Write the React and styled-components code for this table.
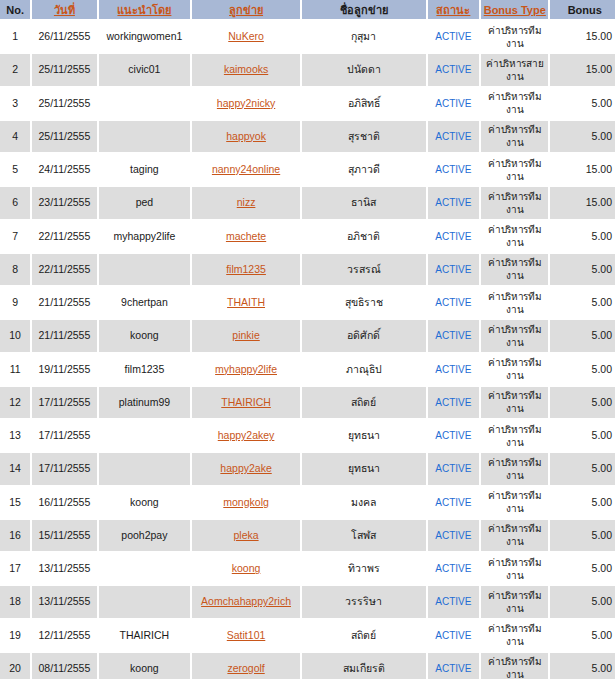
import React from 'react'
import styled, { createGlobalStyle } from 'styled-components'

const GlobalStyle = createGlobalStyle`
  body {
    margin: 0;
    background: #fff;
    font-family: "Liberation Sans", Arial, sans-serif;
  }
`

const Wrap = styled.div`
  width: 615px;
  height: 679px;
  overflow: hidden;
`

const Table = styled.table`
  border-collapse: separate;
  border-spacing: 2px;
  margin: -2px 0 0 -2px;
  table-layout: fixed;
  width: 623px;
  font-size: 10.5px;
  color: #1a1a1a;
`

const HeadCell = styled.th`
  height: 19px;
  padding: 0;
  background: #a8b8d5;
  font-weight: bold;
  font-size: 11px;
  text-align: center;
  vertical-align: middle;
  color: #1c1c1c;
  white-space: nowrap;
`

const Row = styled.tr`
  height: 31.25px;
`

const Cell = styled.td`
  height: 31.25px;
  padding: 0 ${(p) => (p.$align === 'right' ? '7px' : '1px')} 0 1px;
  background: ${(p) => (p.$alt ? '#dddddd' : '#ffffff')};
  text-align: ${(p) => p.$align || 'center'};
  vertical-align: middle;
  line-height: 13px;
  white-space: nowrap;
  overflow: hidden;
`

const Link = styled.a`
  color: #c8561a;
  text-decoration: underline;
  cursor: pointer;
`

const Status = styled.span`
  color: #1f6dd4;
  font-size: 10px;
`

const TypeText = styled.span`
  display: block;
  font-size: 10px;
  letter-spacing: -0.3px;
  line-height: 13px;
  white-space: nowrap;
`

const cols = [30, 64, 91, 107, 123, 51, 67, 68]

const rows = [
  ['26/11/2555', 'workingwomen1', 'NuKero', 'กุสุมา', 'ค่าบริหารทีม', '15.00'],
  ['25/11/2555', 'civic01', 'kaimooks', 'ปนัดดา', 'ค่าบริหารสาย', '15.00'],
  ['25/11/2555', '', 'happy2nicky', 'อภิสิทธิ์', 'ค่าบริหารทีม', '5.00'],
  ['25/11/2555', '', 'happyok', 'สุรชาติ', 'ค่าบริหารทีม', '5.00'],
  ['24/11/2555', 'taging', 'nanny24online', 'สุภาวดี', 'ค่าบริหารทีม', '15.00'],
  ['23/11/2555', 'ped', 'nizz', 'ธานิส', 'ค่าบริหารทีม', '15.00'],
  ['22/11/2555', 'myhappy2life', 'machete', 'อภิชาติ', 'ค่าบริหารทีม', '5.00'],
  ['22/11/2555', '', 'film1235', 'วรสรณ์', 'ค่าบริหารทีม', '5.00'],
  ['21/11/2555', '9chertpan', 'THAITH', 'สุขธิราช', 'ค่าบริหารทีม', '5.00'],
  ['21/11/2555', 'koong', 'pinkie', 'อดิศักดิ์', 'ค่าบริหารทีม', '5.00'],
  ['19/11/2555', 'film1235', 'myhappy2life', 'ภาณุธิป', 'ค่าบริหารทีม', '5.00'],
  ['17/11/2555', 'platinum99', 'THAIRICH', 'สถิตย์', 'ค่าบริหารทีม', '5.00'],
  ['17/11/2555', '', 'happy2akey', 'ยุทธนา', 'ค่าบริหารทีม', '5.00'],
  ['17/11/2555', '', 'happy2ake', 'ยุทธนา', 'ค่าบริหารทีม', '5.00'],
  ['16/11/2555', 'koong', 'mongkolg', 'มงคล', 'ค่าบริหารทีม', '5.00'],
  ['15/11/2555', 'pooh2pay', 'pleka', 'โสฬส', 'ค่าบริหารทีม', '5.00'],
  ['13/11/2555', '', 'koong', 'ทิวาพร', 'ค่าบริหารทีม', '5.00'],
  ['13/11/2555', '', 'Aomchahappy2rich', 'วรรริษา', 'ค่าบริหารทีม', '5.00'],
  ['12/11/2555', 'THAIRICH', 'Satit101', 'สถิตย์', 'ค่าบริหารทีม', '5.00'],
  ['08/11/2555', 'koong', 'zerogolf', 'สมเกียรติ', 'ค่าบริหารทีม', '5.00']
]

export default function App () {
  return (
    <Wrap>
      <GlobalStyle />
      <Table>
        <colgroup>
          {cols.map((w, i) => <col key={i} style={{ width: w }} />)}
        </colgroup>
        <thead>
          <tr>
            <HeadCell>No.</HeadCell>
            <HeadCell><Link>วันที่</Link></HeadCell>
            <HeadCell><Link>แนะนำโดย</Link></HeadCell>
            <HeadCell><Link>ลูกข่าย</Link></HeadCell>
            <HeadCell>ชื่อลูกข่าย</HeadCell>
            <HeadCell><Link>สถานะ</Link></HeadCell>
            <HeadCell><Link>Bonus Type</Link></HeadCell>
            <HeadCell>Bonus</HeadCell>
          </tr>
        </thead>
        <tbody>
          {rows.map((r, i) => {
            const alt = i % 2 === 1
            return (
              <Row key={i}>
                <Cell $alt={alt}>{i + 1}</Cell>
                <Cell $alt={alt}>{r[0]}</Cell>
                <Cell $alt={alt}>{r[1]}</Cell>
                <Cell $alt={alt}><Link>{r[2]}</Link></Cell>
                <Cell $alt={alt}>{r[3]}</Cell>
                <Cell $alt={alt}><Status>ACTIVE</Status></Cell>
                <Cell $alt={alt}>
                  <TypeText>{r[4]}</TypeText>
                  <TypeText>งาน</TypeText>
                </Cell>
                <Cell $alt={alt} $align='right'>{r[5]}</Cell>
              </Row>
            )
          })}
        </tbody>
      </Table>
    </Wrap>
  )
}
